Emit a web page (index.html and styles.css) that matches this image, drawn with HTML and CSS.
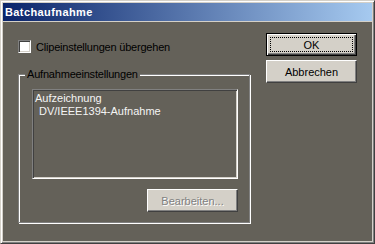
FILE: index.html
```html
<!DOCTYPE html>
<html lang="de">
<head>
    <meta charset="UTF-8">
    <meta name="viewport" content="width=device-width, initial-scale=1.0">
    <title>Batchaufnahme</title>
    <link rel="stylesheet" href="styles.css">
</head>
<body>

    <div class="window">
        <div class="titlebar">Batchaufnahme</div>

        <div class="client">
            <div class="main">
                <label class="check">
                    <span class="box"></span>
                    Clipeinstellungen übergehen
                </label>

                <div class="group">
                    <div class="group-title">Aufnahmeeinstellungen</div>
                    <div class="list">
                        <div class="list-item">Aufzeichnung</div>
                        <div class="list-item sub">DV/IEEE1394-Aufnahme</div>
                    </div>
                    <button class="btn edit" disabled>Bearbeiten...</button>
                </div>
            </div>

            <div class="side">
                <button class="btn default"><span class="focus">OK</span></button>
                <button class="btn">Abbrechen</button>
            </div>
        </div>
    </div>

</body>
</html>
```

FILE: styles.css
```css
body {
    margin: 0;
    padding: 0;
    font-family: "Liberation Sans", Arial, sans-serif;
    font-size: 11px;
}
.window {
    width: 375px;
    height: 244px;
    box-sizing: border-box;
    display: flex;
    flex-direction: column;
    padding: 2px;
    background-color: #d4d0c8;
    border: 1px solid;
    border-color: #d4d0c8 #404040 #404040 #d4d0c8;
    box-shadow: inset 1px 1px #fff, inset -1px -1px #808080;
}
.titlebar {
    height: 18px;
    line-height: 18px;
    padding-left: 2px;
    color: #fff;
    font-weight: bold;
    letter-spacing: 0.4px;
    background: linear-gradient(to right, #0a246a, #a6caf0);
    border-bottom: 1px solid #d4d0c8;
}
.client {
    flex: 1;
    display: flex;
    padding: 0 15px;
    background-color: #646159;
}
.main {
    width: 232px;
}
.check {
    display: flex;
    align-items: center;
    gap: 5px;
    height: 13px;
    margin-top: 18px;
    color: #000;
    letter-spacing: -0.2px;
}
.box {
    width: 13px;
    height: 13px;
    box-sizing: border-box;
    background-color: #fff;
    border: 1px solid;
    border-color: #808080 #fff #fff #808080;
    box-shadow: inset 1px 1px #404040, inset -1px -1px #d4d0c8;
}
.group {
    display: flex;
    flex-direction: column;
    width: 232px;
    height: 149px;
    box-sizing: border-box;
    margin-top: 21px;
    padding: 0 11px 0 13px;
    border: 1px solid #808080;
    box-shadow: inset 1px 1px #fff, 1px 1px #fff;
}
.group-title {
    width: fit-content;
    margin: -7px 0 0 -7px;
    padding: 0 2px;
    line-height: 13px;
    color: #000;
    letter-spacing: -0.2px;
    background-color: #646159;
}
.list {
    height: 90px;
    box-sizing: border-box;
    margin-top: 8px;
    padding: 2px;
    color: #f4f4f4;
    line-height: 13px;
    border: 1px solid;
    border-color: #808080 #fff #fff #808080;
    box-shadow: inset 1px 1px #404040, inset -1px -1px #d4d0c8;
}
.list-item.sub {
    padding-left: 4px;
}
.btn {
    display: flex;
    align-items: center;
    justify-content: center;
    width: 91px;
    height: 23px;
    box-sizing: border-box;
    padding: 0;
    font-family: inherit;
    font-size: 11px;
    color: #000;
    background-color: #d4d0c8;
    border: 1px solid;
    border-color: #fff #404040 #404040 #fff;
    box-shadow: inset -1px -1px #808080;
}
.btn.edit {
    align-self: flex-end;
    margin-top: 10px;
    color: #808080;
    text-shadow: 1px 1px #fff;
}
.btn.default {
    align-items: stretch;
    padding: 3px;
    border: 1px solid #000;
    box-shadow: inset 1px 1px #fff, inset -1px -1px #404040, inset -2px -2px #808080;
}
.focus {
    flex: 1;
    display: flex;
    align-items: center;
    justify-content: center;
    border: 1px dotted #000;
}
.side {
    display: flex;
    flex-direction: column;
    gap: 4px;
    margin: 11px 0 0 16px;
}
```
